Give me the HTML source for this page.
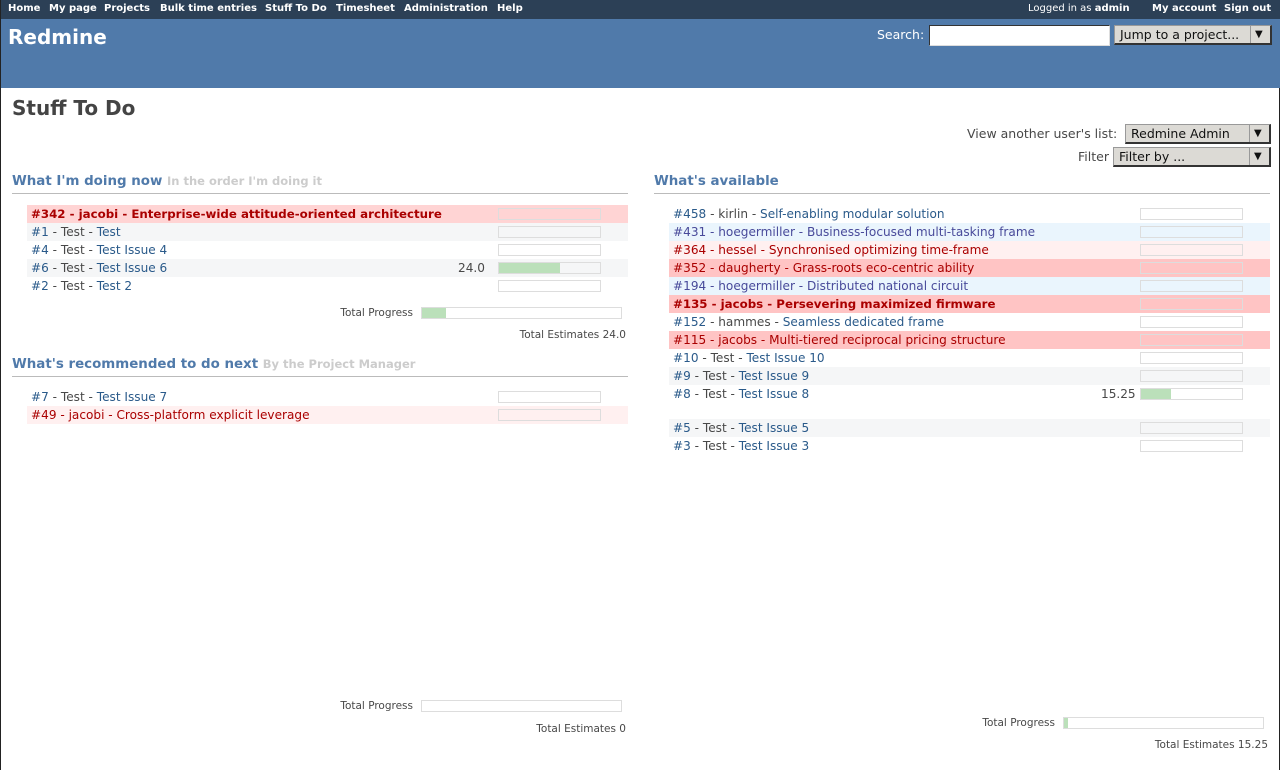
<!DOCTYPE html>
<html><head><meta charset="utf-8"><style>
*{margin:0;padding:0;box-sizing:border-box}
body{width:1280px;height:770px;position:relative;background:#fff;font-family:"DejaVu Sans","Liberation Sans",sans-serif;font-size:12.1px;color:#484848;overflow:hidden;border-left:1px solid #222;border-right:1px solid #222}
.top{position:absolute;left:0;top:0;width:1280px;height:19px;background:#2c4056;color:#fff;font-size:10px;font-weight:bold}
.top span{position:absolute;top:3px;white-space:nowrap}
.hdr{position:absolute;left:0;top:19px;width:1280px;height:69px;background:#507aaa;color:#fff}
.a{position:absolute;white-space:nowrap}
.row{position:absolute;height:18px;line-height:18px;padding-left:4px;white-space:nowrap}
.bd{font-weight:bold;font-size:11.8px}
.bar{position:absolute;top:3px;width:103px;height:12px;border:1px solid #ddd;background:#fff}
.bar i{display:block;height:100%;background:#bbe0ba}
.b{color:#2a5a8a}.r{color:#aa0000}.p{color:#484a9a}
h2{position:absolute;font-size:13.4px;font-weight:bold;color:#507aaa;border-bottom:1px solid #bbb;height:20px;white-space:nowrap}
h2 small{font-size:11.5px;color:#ccc}
.sel{position:absolute;height:20px;background:#dcdad5;border:1px solid #999;border-bottom:2px solid #333;border-right:2px solid #333;font-size:12.5px;line-height:17px;padding-left:5px;color:#111}
.sel:after{content:"▼";position:absolute;right:3px;top:0;font-size:10px;border-left:1px solid #999;padding-left:4px;width:12px}
.sm{position:absolute;font-size:10.5px;white-space:nowrap;text-align:right}
</style></head><body>
<div class="top">
<span style="left:7px">Home</span><span style="left:48px">My page</span><span style="left:103px">Projects</span><span style="left:159px">Bulk time entries</span><span style="left:264px">Stuff To Do</span><span style="left:335px">Timesheet</span><span style="left:403px">Administration</span><span style="left:496px">Help</span>
<span style="left:1027px;font-weight:normal">Logged in as <b>admin</b></span><span style="left:1151px">My account</span><span style="left:1223px">Sign out</span>
</div>
<div class="hdr">
<div class="a" style="left:7px;top:6px;font-size:20px;font-weight:bold">Redmine</div>
<div class="a" style="left:876px;top:8px;font-size:12.5px">Search:</div>
<div class="a" style="left:928px;top:6px;width:181px;height:21px;background:#fff;border:1px solid #333;border-right-color:#ddd;border-bottom-color:#ddd"></div>
<div class="sel" style="left:1113px;top:6px;width:158px">Jump to a project...</div>
</div>
<div class="a" style="left:11px;top:96px;font-size:20px;font-weight:bold;color:#444">Stuff To Do</div>
<div class="a" style="left:966px;top:126px;font-size:12.5px">View another user's list:</div>
<div class="sel" style="left:1124px;top:124px;width:146px">Redmine Admin</div>
<div class="a" style="left:1077px;top:149px;font-size:12.5px">Filter</div>
<div class="sel" style="left:1112px;top:147px;width:158px">Filter by ...</div>

<h2 style="left:11px;top:174px;width:616px">What I'm doing now <small>In the order I'm doing it</small></h2>
<div class="row r bd" style="left:26px;top:205px;width:601px;background:#ffd4d4">#342 - jacobi - Enterprise-wide attitude-oriented architecture<div class="bar" style="left:471px;background:#ffd4d4"></div></div>
<div class="row" style="left:26px;top:223px;width:601px;background:#f5f6f7"><span class="b">#1</span> - Test - <span class="b">Test</span><div class="bar" style="left:471px;background:#f5f6f7"></div></div>
<div class="row" style="left:26px;top:241px;width:601px"><span class="b">#4</span> - Test - <span class="b">Test Issue 4</span><div class="bar" style="left:471px"></div></div>
<div class="row" style="left:26px;top:259px;width:601px;background:#f5f6f7"><span class="b">#6</span> - Test - <span class="b">Test Issue 6</span><span class="a" style="left:431px">24.0</span><div class="bar" style="left:471px;background:#f5f6f7"><i style="width:60%"></i></div></div>
<div class="row" style="left:26px;top:277px;width:601px"><span class="b">#2</span> - Test - <span class="b">Test 2</span><div class="bar" style="left:471px"></div></div>
<div class="sm" style="right:866px;top:307px">Total Progress</div>
<div class="a" style="left:420px;top:307px;width:201px;height:12px;border:1px solid #ddd"><i style="display:block;width:24px;height:100%;background:#bbe0ba"></i></div>
<div class="sm" style="right:653px;top:329px">Total Estimates 24.0</div>

<h2 style="left:11px;top:357px;width:616px">What's recommended to do next <small>By the Project Manager</small></h2>
<div class="row" style="left:26px;top:388px;width:601px"><span class="b">#7</span> - Test - <span class="b">Test Issue 7</span><div class="bar" style="left:471px"></div></div>
<div class="row r" style="left:26px;top:406px;width:601px;background:#fff0f0">#49 - jacobi - Cross-platform explicit leverage<div class="bar" style="left:471px;background:#fff0f0"></div></div>
<div class="sm" style="right:866px;top:700px">Total Progress</div>
<div class="a" style="left:420px;top:700px;width:201px;height:12px;border:1px solid #ddd"></div>
<div class="sm" style="right:653px;top:723px">Total Estimates 0</div>

<h2 style="left:653px;top:174px;width:616px">What's available</h2>
<div class="row" style="left:668px;top:205px;width:601px"><span class="b">#458</span> - kirlin - <span class="b">Self-enabling modular solution</span><div class="bar" style="left:471px"></div></div>
<div class="row p" style="left:668px;top:223px;width:601px;background:#eaf5fd">#431 - hoegermiller - Business-focused multi-tasking frame<div class="bar" style="left:471px;background:#eaf5fd"></div></div>
<div class="row r" style="left:668px;top:241px;width:601px;background:#fff0f0">#364 - hessel - Synchronised optimizing time-frame<div class="bar" style="left:471px;background:#fff0f0"></div></div>
<div class="row r" style="left:668px;top:259px;width:601px;background:#ffc4c4">#352 - daugherty - Grass-roots eco-centric ability<div class="bar" style="left:471px;background:#ffc4c4"></div></div>
<div class="row p" style="left:668px;top:277px;width:601px;background:#eaf5fd">#194 - hoegermiller - Distributed national circuit<div class="bar" style="left:471px;background:#eaf5fd"></div></div>
<div class="row r bd" style="left:668px;top:295px;width:601px;background:#ffc4c4">#135 - jacobs - Persevering maximized firmware<div class="bar" style="left:471px;background:#ffc4c4"></div></div>
<div class="row" style="left:668px;top:313px;width:601px"><span class="b">#152</span> - hammes - <span class="b">Seamless dedicated frame</span><div class="bar" style="left:471px"></div></div>
<div class="row r" style="left:668px;top:331px;width:601px;background:#ffc4c4">#115 - jacobs - Multi-tiered reciprocal pricing structure<div class="bar" style="left:471px;background:#ffc4c4"></div></div>
<div class="row" style="left:668px;top:349px;width:601px"><span class="b">#10</span> - Test - <span class="b">Test Issue 10</span><div class="bar" style="left:471px"></div></div>
<div class="row" style="left:668px;top:367px;width:601px;background:#f5f6f7"><span class="b">#9</span> - Test - <span class="b">Test Issue 9</span><div class="bar" style="left:471px;background:#f5f6f7"></div></div>
<div class="row" style="left:668px;top:385px;width:601px"><span class="b">#8</span> - Test - <span class="b">Test Issue 8</span><span class="a" style="left:432px">15.25</span><div class="bar" style="left:471px"><i style="width:30%"></i></div></div>
<div class="row" style="left:668px;top:419px;width:601px;background:#f5f6f7"><span class="b">#5</span> - Test - <span class="b">Test Issue 5</span><div class="bar" style="left:471px;background:#f5f6f7"></div></div>
<div class="row" style="left:668px;top:437px;width:601px"><span class="b">#3</span> - Test - <span class="b">Test Issue 3</span><div class="bar" style="left:471px"></div></div>
<div class="sm" style="right:224px;top:717px">Total Progress</div>
<div class="a" style="left:1062px;top:717px;width:201px;height:12px;border:1px solid #ddd"><i style="display:block;width:4px;height:100%;background:#bbe0ba"></i></div>
<div class="sm" style="right:11px;top:739px">Total Estimates 15.25</div>
</body></html>
